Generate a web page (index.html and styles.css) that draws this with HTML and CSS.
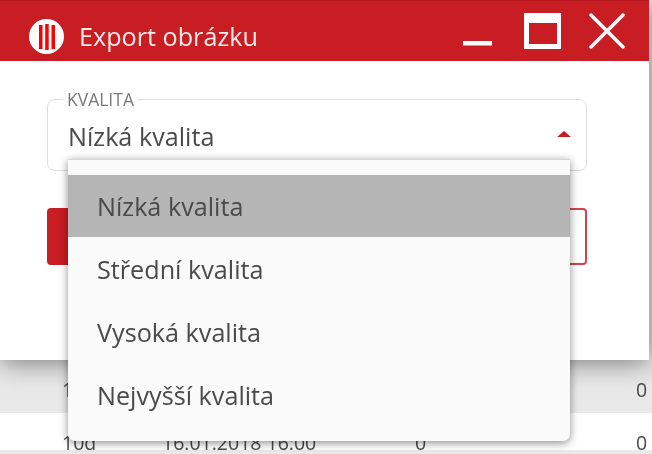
FILE: index.html
```html
<!DOCTYPE html>
<html lang="cs">
<head>
  <meta charset="utf-8">
  <title>Export obrázku</title>
  <link rel="stylesheet" href="styles.css">
</head>
<body>
  <div class="page">
    <div class="dialog">
      <div class="dialog-head">
        <svg class="logo" width="35" height="35" viewBox="0 0 35 35">
          <circle cx="17.5" cy="17.5" r="17.5" fill="#fff"/>
          <rect x="10" y="6" width="3.5" height="24" fill="#f00"/>
          <rect x="16.2" y="5" width="3.5" height="26" fill="#f00"/>
          <rect x="22.5" y="6" width="3.5" height="24" fill="#f00"/>
        </svg>
        <span class="dialog-title">Export obrázku</span>
        <div class="win-btns">
          <svg class="win-min" width="29" height="36" viewBox="0 0 29 36"><rect x="0" y="28" width="29" height="4.5" fill="#fff"/></svg>
          <svg width="37" height="36" viewBox="0 0 37 36"><path fill="#fff" fill-rule="evenodd" d="M0 0H37V36H0Z M5 10V31H33V10Z"/></svg>
          <svg width="36" height="36" viewBox="0 0 36 36"><path d="M2 2 L34 34 M34 2 L2 34" stroke="#fff" stroke-width="3.5" stroke-linecap="round"/></svg>
        </div>
      </div>
      <div class="dialog-body">
        <fieldset class="field">
          <legend>KVALITA</legend>
          <div class="field-value">
            <span>Nízká kvalita</span>
            <span class="arrow"></span>
          </div>
        </fieldset>
        <div class="actions">
          <div class="btn btn-red"></div>
          <div class="btn btn-line"></div>
        </div>
      </div>
    </div>

    <div class="row row-gray">
      <span class="c1">1</span>
      <span class="c4">0</span>
    </div>
    <div class="row">
      <span class="c1">10d</span>
      <span class="c2">16.01.2018 16:00</span>
      <span class="c3">0</span>
      <span class="c4">0</span>
    </div>

    <ul class="menu">
      <li class="active">Nízká kvalita</li>
      <li>Střední kvalita</li>
      <li>Vysoká kvalita</li>
      <li>Nejvyšší kvalita</li>
    </ul>
  </div>
</body>
</html>
```

FILE: styles.css
```css
html, body {
  padding: 0;
  margin: 0;
}
body {
  overflow: hidden;
  background-color: #e9e9e9;
}
.page {
  position: relative;
  width: 652px;
  height: 454px;
  overflow: hidden;
  filter: blur(.45px);
  background-color: #e9e9e9;
  font-family: "Open Sans", "Noto Sans", sans-serif;
  color: #4a4a4a;
}
.dialog {
  position: relative;
  z-index: 2;
  width: 649px;
  height: 360px;
  background-color: #fff;
  box-shadow: 0 2px 26px rgba(0, 0, 0, .5);
}
.dialog-head {
  display: flex;
  align-items: center;
  height: 61px;
  padding: 0 24px 0 29px;
  box-sizing: border-box;
  background-color: #c91d24;
  border-top: 1px solid #b81a20;
  color: #fff;
}
.logo {
  flex: none;
  margin-top: 10px;
}
.dialog-title {
  margin-top: 9px;
  margin-left: 15px;
  font-size: 25.2px;
  color: #fbeaea;
}
.win-btns {
  display: flex;
  gap: 28px;
  margin-left: auto;
  margin-top: -1px;
}
.win-min {
  margin-right: 4px;
}
.dialog-body {
  padding: 31px 62px 0 47px;
}
.field {
  margin: 0;
  height: 79px;
  padding: 0 20px;
  box-sizing: border-box;
  border: 1px solid #ddd;
  border-radius: 8px;
}
.field legend {
  padding: 0 4px;
  margin-left: -5px;
  font-size: 17.5px;
  line-height: 15px;
  color: #7a7a7a;
}
.field-value {
  display: flex;
  align-items: center;
  justify-content: space-between;
  height: 58px;
  font-size: 25.2px;
}
.arrow {
  width: 0;
  height: 0;
  margin-top: -4px;
  margin-right: -5px;
  border-left: 7px solid transparent;
  border-right: 7px solid transparent;
  border-bottom: 6px solid #c91d24;
}
.actions {
  display: flex;
  gap: 10px;
  margin-top: 37px;
}
.btn {
  flex: 1;
  height: 57px;
  box-sizing: border-box;
  border-radius: 4px;
}
.btn-red {
  background-color: #c91d24;
}
.btn-line {
  border: 2px solid #d3434a;
}
.row {
  display: flex;
  height: 37px;
  padding-top: 16px;
  box-sizing: border-box;
  background-color: #fff;
  font-size: 19.5px;
  line-height: 28px;
  white-space: nowrap;
}
.row-gray {
  height: 53px;
  padding-top: 16px;
  background-color: #e9e9e9;
}
.c1 {
  margin-left: 62px;
  width: 100px;
}
.c2 {
  width: 253px;
}
.c3 {
  width: 225px;
}
.c4 {
  position: absolute;
  left: 636px;
}
.menu {
  position: absolute;
  z-index: 3;
  left: 68px;
  top: 159px;
  width: 502px;
  height: 282px;
  box-sizing: border-box;
  margin: 0;
  padding: 15px 0 0;
  list-style: none;
  background-color: #fafafa;
  border-radius: 0 0 7px 7px;
  border-top: 1px solid #d8d8d8;
  box-shadow: 0 2px 9px rgba(0, 0, 0, .45);
  font-size: 25.2px;
}
.menu li {
  height: 63px;
  padding-left: 29px;
  line-height: 62px;
}
.menu .active {
  height: 62px;
  margin-bottom: 1px;
  background-color: #b5b5b5;
}
```
